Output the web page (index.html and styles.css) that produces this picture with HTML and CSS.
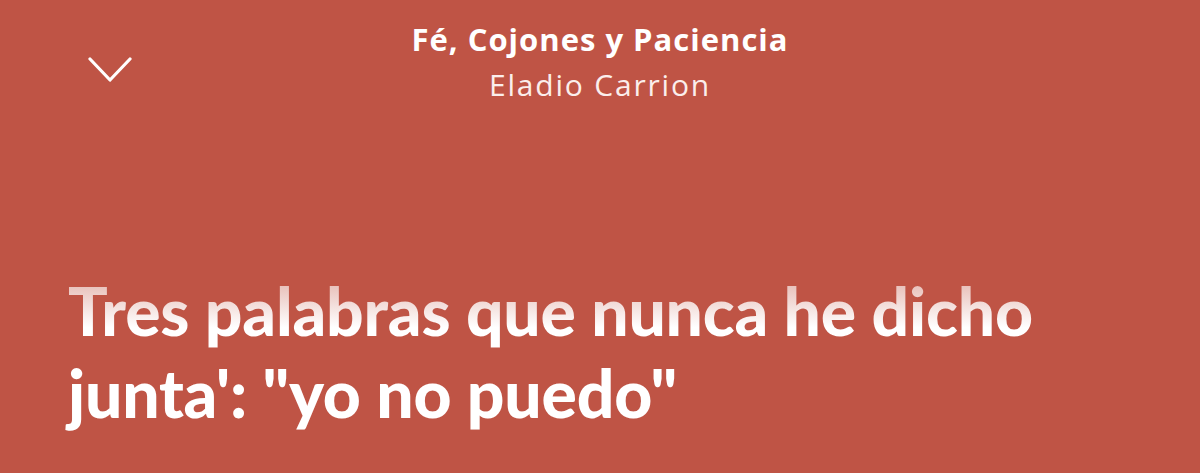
FILE: index.html
```html
<!DOCTYPE html>
<html lang="es">
<head>
<meta charset="utf-8">
<title>Fé, Cojones y Paciencia — Letra</title>
<link rel="stylesheet" href="styles.css">
</head>
<body>
<main class="player">
  <header class="topbar">
    <button class="collapse" aria-label="Cerrar">
      <svg width="44" height="26" viewBox="0 0 44 26" aria-hidden="true">
        <path d="M2 2 L22 23 L42 2" fill="none" stroke="#fff" stroke-width="3.2" stroke-linecap="round" stroke-linejoin="round"/>
      </svg>
    </button>
    <div class="track">
      <div class="track-title">Fé, Cojones y Paciencia</div>
      <div class="track-artist">Eladio Carrion</div>
    </div>
  </header>
  <section class="lyrics">
    <p class="line line-fade">Tres palabras que nunca he dicho</p>
    <p class="line">junta': "yo no puedo"</p>
  </section>
</main>
</body>
</html>
```

FILE: styles.css
```css
html, body {
  margin: 0;
  padding: 0;
  height: 100%;
}

body {
  background: #bf5445;
  font-family: Lato, "Noto Sans", sans-serif;
  color: #fff;
  overflow: hidden;
}

.player {
  display: flex;
  flex-direction: column;
  height: 100%;
}

.topbar {
  position: relative;
  display: flex;
  justify-content: center;
  padding-top: 19px;
}

.collapse {
  position: absolute;
  left: 88px;
  top: 57px;
  background: none;
  border: 0;
  padding: 0;
  cursor: pointer;
  line-height: 0;
}

.track {
  text-align: center;
  font-family: "Open Sans", Lato, sans-serif;
}

.track-title {
  font-weight: 700;
  font-size: 31px;
  line-height: 40px;
  letter-spacing: 1px;
}

.track-artist {
  font-weight: 400;
  font-size: 30px;
  line-height: 52px;
  letter-spacing: 1.8px;
  color: #fbeeec;
}

.lyrics {
  padding: 159px 0 0 68px;
}

.line {
  margin: 0;
  font-weight: 900;
  font-size: 66px;
  line-height: 82px;
  letter-spacing: -0.2px;
  white-space: nowrap;
}

.line-fade {
  background: linear-gradient(180deg, #e9c3bd 20%, #ffffff 70%);
  -webkit-background-clip: text;
  background-clip: text;
  color: transparent;
}
```
